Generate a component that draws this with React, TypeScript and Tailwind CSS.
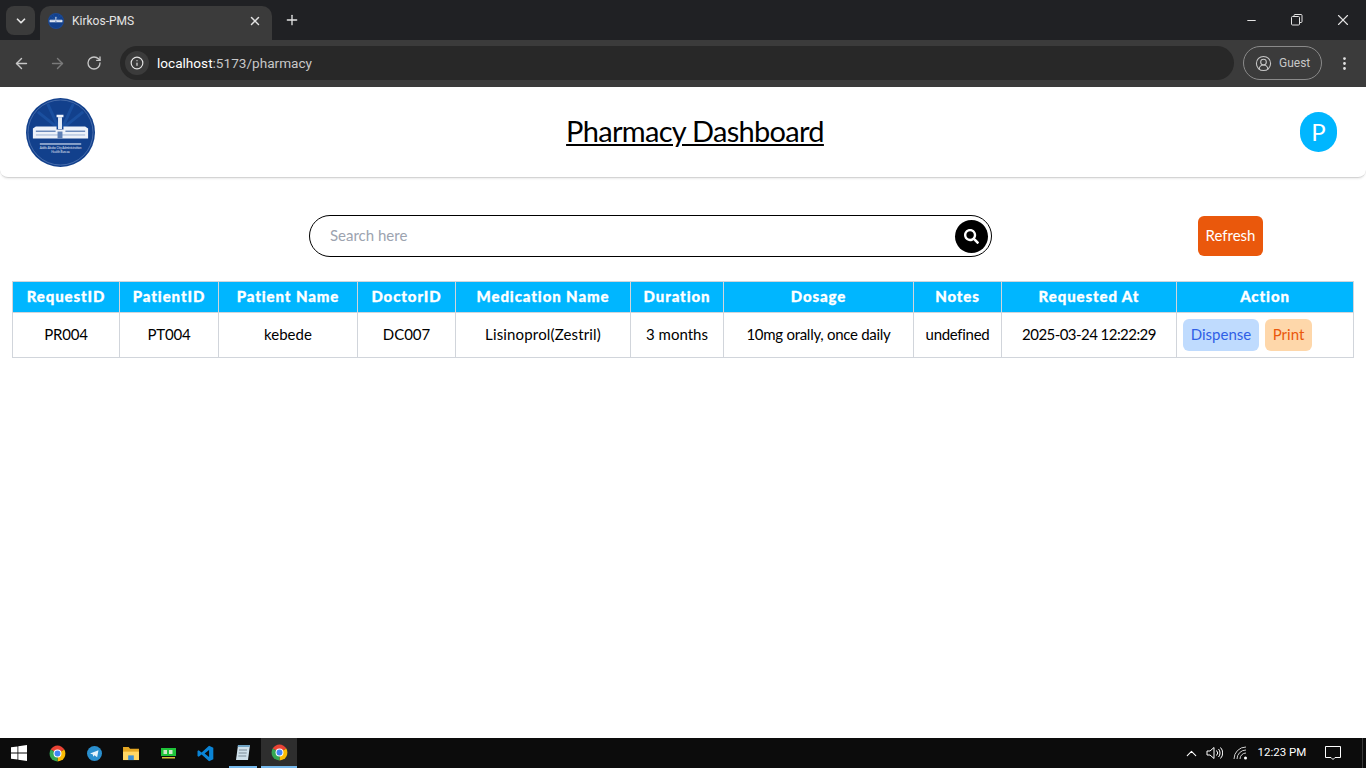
import { ArrowLeft, ArrowRight, RotateCw, Info, X, Plus, ChevronDown, Minus, CircleUserRound, EllipsisVertical, ChevronUp } from "lucide-react";
import { FaSearch } from "react-icons/fa";

const cols = [
  { h: "RequestID", v: "PR004", w: "w-[107px]", t: "tracking-[-0.2px]" },
  { h: "PatientID", v: "PT004", w: "w-[99px]", t: "tracking-[-0.2px]" },
  { h: "Patient Name", v: "kebede", w: "w-[139px]", t: "tracking-[0px]" },
  { h: "DoctorID", v: "DC007", w: "w-[98px]", t: "tracking-[0px]" },
  { h: "Medication Name", v: "Lisinoprol(Zestril)", w: "w-[175px]", t: "tracking-[0.15px]" },
  { h: "Duration", v: "3 months", w: "w-[93px]", t: "tracking-[0px]" },
  { h: "Dosage", v: "10mg orally, once daily", w: "w-[190px]", t: "tracking-[-0.28px]" },
  { h: "Notes", v: "undefined", w: "w-[88px]", t: "tracking-[-0.3px]" },
  { h: "Requested At", v: "2025-03-24 12:22:29", w: "w-[175px]", t: "tracking-[-0.55px]" },
];

function ChromeLogo({ size = 19 }: { size?: number }) {
  return (
    <svg width={size} height={size} viewBox="0 0 48 48">
      <path d="M24 24L6.700 14A20 20 0 0 1 41.300 14z" fill="#ea4335" />
      <path d="M24 24L41.300 14A20 20 0 0 1 24 44z" fill="#fbbc05" />
      <path d="M24 24L24 44A20 20 0 0 1 6.700 14z" fill="#34a853" />
      <circle cx="24" cy="24" r="10" fill="#fff" />
      <circle cx="24" cy="24" r="7.500" fill="#4285f4" />
    </svg>
  );
}

function Logo({ size, detail = false }: { size: number; detail?: boolean }) {
  return (
    <svg width={size} height={size} viewBox="0 0 70 70">
      <circle cx="35" cy="35" r="35" fill="#12408c" />
      <circle cx="35" cy="35" r="33" fill="none" stroke="#7f9ccb" strokeWidth="0.5" />
      <path d="M32 30L12 14M33 30L22 6M37 30L48 6M38 30L58 14" stroke="#1a4f9f" strokeWidth="3" />
      <rect x="31" y="17" width="7" height="2.500" fill="#f2f5fb" />
      <rect x="32.500" y="19.500" width="4" height="12" fill="#e3ebf7" />
      <path d="M7 31l3-2h21v3h7v-3h22l3 2v10H7z" fill="#eef2f9" />
      <rect x="10" y="33" width="20" height="1.500" fill="#6f8dbd" />
      <rect x="40" y="33" width="20" height="1.500" fill="#6f8dbd" />
      <rect x="10" y="37" width="50" height="1" fill="#9db3d6" />
      <rect x="32" y="34" width="5" height="7" fill="#5f80b5" />
      {detail ? (
        <>
          <rect x="14" y="46" width="42" height="1.300" fill="#c5d2e8" />
          <text x="35" y="52" textAnchor="middle" fontSize="3" fill="#e8eef8">Addis Ababa City Administration</text>
          <text x="35" y="56" textAnchor="middle" fontSize="3" fill="#e8eef8">Health Bureau</text>
        </>
      ) : null}
    </svg>
  );
}

function BrowserBar() {
  return (
    <div className="w-full font-['Roboto',sans-serif] text-[#e3e3e3]">
      <div className="h-10 bg-[#202124] flex items-end pl-[6px]">
        <div className="mb-[5px] mr-[5px] w-[29px] h-[29px] rounded-lg bg-[#3b3b3b] flex items-center justify-center">
          <ChevronDown size={14} strokeWidth={3} />
        </div>
        <div className="h-[34px] w-[232px] rounded-t-[10px] bg-[#3b3b3b] flex items-center pl-[8px] pr-[10px] pb-1">
          <Logo size={16} />
          <span className="ml-2 text-xs flex-1">Kirkos-PMS</span>
          <X size={14} strokeWidth={2.500} />
        </div>
        <div className="mb-[6px] ml-[6px] w-7 h-7 flex items-center justify-center">
          <Plus size={16} strokeWidth={2} />
        </div>
        <div className="flex-1" />
        <div className="h-10 flex items-center">
          <div className="w-[46px] flex justify-center"><Minus size={13} /></div>
          <div className="w-[46px] flex justify-center">
            <svg width="12" height="12" viewBox="0 0 12 12" fill="none" stroke="#e3e3e3"><rect x="0.500" y="2.500" width="8" height="8.500" rx="1" /><path d="M3 2.500V1.500a1 1 0 0 1 1-1h6a1 1 0 0 1 1 1v6a1 1 0 0 1-1 1H8.500" /></svg>
          </div>
          <div className="w-[46px] flex justify-center"><X size={18} strokeWidth={1.500} /></div>
        </div>
      </div>
      <div className="h-[47px] bg-[#3b3b3b] flex items-center pl-[13px] pr-[13px] pb-[1px]">
        <ArrowLeft size={17} className="text-[#c7c7c7]" />
        <ArrowRight size={17} className="ml-[19px] text-[#7a7a7a]" />
        <RotateCw size={16} className="ml-[20px] text-[#c7c7c7]" />
        <div className="ml-[18px] h-[34px] flex-1 rounded-full bg-[#282828] flex items-center pl-[5px]">
          <div className="w-6 h-6 rounded-full bg-[#3b3b3b] flex items-center justify-center"><Info size={14} /></div>
          <span className="ml-2 text-[13.600px] text-[#c7c7c7]"><span className="text-white">localhost</span>:5173/pharmacy</span>
        </div>
        <div className="ml-[9px] w-[79px] h-[34px] rounded-full border border-[#8a8a8a] flex items-center pl-[11px] gap-[7px] text-xs text-[#c7c7c7]">
          <CircleUserRound size={17} strokeWidth={1.500} />
          <span>Guest</span>
        </div>
        <EllipsisVertical size={17} className="ml-[14px]" />
      </div>
    </div>
  );
}

function PageHeader() {
  return (
    <header className="h-[91px] rounded-b-lg border-b border-[#d4d4d4] shadow-[0_1px_2px_rgba(0,0,0,0.08)] flex items-center pl-[26px] pr-[29px]">
      <Logo size={69} detail />
      <h1 className="flex-1 text-center text-[29px] leading-9 underline text-black pr-[5px] pb-[2px] font-normal tracking-[-0.7px]">Pharmacy Dashboard</h1>
      <div className="w-[37px] h-10 rounded-full bg-[#00b6ff] flex items-center justify-center text-white text-2xl">P</div>
    </header>
  );
}

function Toolbar() {
  return (
    <div className="flex items-center mt-[37px] pl-[309px]">
      <div className="w-[683px] h-[42px] rounded-full border border-black flex items-center pl-5 pr-[3px]">
        <span className="flex-1 text-[15px] text-[#9ca3af] pb-[2px]">Search here</span>
        <div className="w-[33px] h-[33px] rounded-full bg-black flex items-center justify-center">
          <FaSearch size={15} className="text-white" />
        </div>
      </div>
      <button className="ml-[206px] w-[65px] h-10 rounded-md bg-[#ea580c] text-white text-[15px] pb-[2px]">Refresh</button>
    </div>
  );
}

function DataTable() {
  const border = "border border-[#d1d5db]";
  const head = "font-black text-center tracking-[0.9px] pb-[2px] [-webkit-text-stroke:0.3px_white]";
  return (
    <div className="px-3 mt-6">
      <table className="w-[1342px] table-fixed border-collapse text-[15px] text-black">
        <thead>
          <tr className="h-[31px] bg-[#00b6ff] text-white">
            {cols.map((c) => (
              <th key={c.h} className={`${c.w} ${border} ${head}`}>{c.h}</th>
            ))}
            <th className={`${border} ${head}`}>Action</th>
          </tr>
        </thead>
        <tbody>
          <tr className="h-[45px]">
            {cols.map((c) => (
              <td key={c.h} className={`${border} ${c.t} text-center whitespace-nowrap pb-[2px]`}>{c.v}</td>
            ))}
            <td className={border}>
              <div className="flex pl-[6px] gap-[6px]">
                <button className="w-[76px] h-8 rounded-md bg-[#bfdbfe] text-[#2f5fe6] pb-[2px]">Dispense</button>
                <button className="w-[47px] h-8 rounded-md bg-[#fed7aa] text-[#ea580c] pb-[2px]">Print</button>
              </div>
            </td>
          </tr>
        </tbody>
      </table>
    </div>
  );
}

function Taskbar() {
  return (
    <div className="h-[30px] bg-[#0c0c0c] flex items-center text-white font-['Roboto',sans-serif]">
      <div className="w-[39px] flex justify-center pr-[2px]">
        <svg width="16" height="16" viewBox="0 0 16 16" fill="#fff"><path d="M0 2.300l6.500-.9v6.200H0zM7.300 1.300L16 0v7.600H7.300zM0 8.400h6.500v6.200L0 13.700zM7.300 8.400H16V16l-8.700-1.200z" /></svg>
      </div>
      <div className="w-[37px] flex justify-center pr-px"><ChromeLogo /></div>
      <div className="w-[37px] flex justify-center pr-px">
        <svg width="15" height="15" viewBox="0 0 17 17"><circle cx="8.500" cy="8.500" r="8.500" fill="#2a8fce" /><path d="M3.500 8.500L13 4.800l-1.500 8-3-2.200-1.500 1.500-.3-2.500z" fill="#e8f4fb" /></svg>
      </div>
      <div className="w-[37px] flex justify-center pr-px">
        <svg width="16" height="15" viewBox="0 0 17 16"><path d="M0 1h6l1.500 2H17v12H0z" fill="#e5a823" /><path d="M0 6h17v9H0z" fill="#ffd765" /><rect x="5.500" y="10" width="6" height="5" fill="#3b8fd6" /></svg>
      </div>
      <div className="w-[37px] flex justify-center">
        <svg width="15" height="12" viewBox="0 0 15 12"><rect y="1" width="15" height="8" fill="#1fc43a" /><rect x="2.500" y="3" width="3.500" height="4" fill="#cfe8c8" /><rect x="8" y="3" width="3.500" height="4" fill="#cfe8c8" /><rect x="1" y="10" width="13" height="1.500" fill="#d9c23a" /></svg>
      </div>
      <div className="w-[37px] flex justify-center pr-px">
        <svg width="17" height="17" viewBox="0 0 100 100"><path d="M71 4l25 12v68L71 96 27 56 10 69 3 65V35l7-4 17 13zM71 30L45 50l26 20z" fill="#0a84d6" /></svg>
      </div>
      <div className="w-[37px] h-full flex justify-center">
        <div className="w-[28px] h-full flex justify-center items-center border-b-2 border-[#76b9ed]">
          <svg width="16" height="17" viewBox="0 0 16 17"><path d="M3 1h12l-2 15H1z" fill="#cfe0ea" /><path d="M3 1h12l-.3 2H2.700z" fill="#6fa3c4" /><path d="M4 6h8M3.700 9h8M3.300 12h8" stroke="#7a8a96" /></svg>
        </div>
      </div>
      <div className="w-9 h-full bg-[#2e2e2e] flex justify-center items-center border-b-2 border-[#76b9ed]"><ChromeLogo /></div>
      <div className="flex-1" />
      <ChevronUp size={17} strokeWidth={1.500} />
      <svg className="ml-[6px]" width="17" height="16" viewBox="0 0 17 16" fill="none" stroke="#fff"><path d="M1 6h3l4-3.500v11L4 10H1zM10.500 5.500a3.500 3.500 0 0 1 0 5M12.500 4a6 6 0 0 1 0 8M14.500 2.500a8 8 0 0 1 0 11" /></svg>
      <svg className="ml-[10px]" width="15" height="14" viewBox="0 0 15 14" fill="none" stroke="#d0d0d0"><path d="M1 13A12 12 0 0 1 13 1M4 13A9 9 0 0 1 13 4M7 13A6 6 0 0 1 13 7" /><circle cx="12.500" cy="12" r="1.500" fill="#fff" stroke="none" /></svg>
      <span className="ml-[9px] text-[11.500px] w-[50px] text-center">12:23 PM</span>
      <svg className="ml-[17px]" width="18" height="16" viewBox="0 0 18 16" fill="none" stroke="#fff"><path d="M1.500 1.500h15v11h-5.500l-2 2-2-2H1.500z" /></svg>
      <div className="w-[20px]" />
      <div className="w-px h-full bg-[#3a3a3a]" />
      <div className="w-[3px]" />
    </div>
  );
}

export default function App() {
  return (
    <div className="h-[768px] w-[1366px] overflow-hidden bg-white flex flex-col font-['Lato',sans-serif]">
      <BrowserBar />
      <main className="flex-1">
        <PageHeader />
        <Toolbar />
        <DataTable />
      </main>
      <Taskbar />
    </div>
  );
}
